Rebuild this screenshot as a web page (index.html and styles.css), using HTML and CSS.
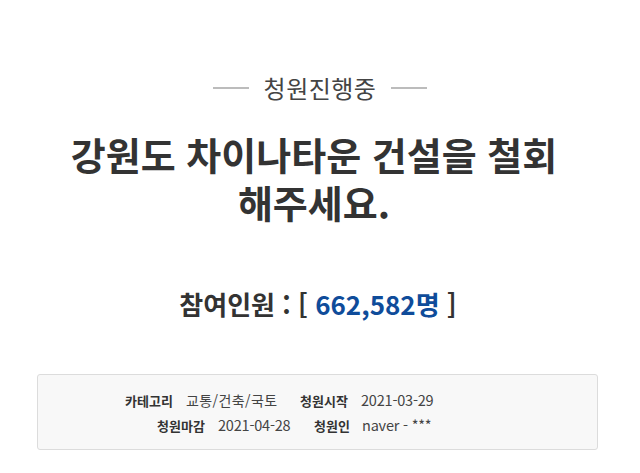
FILE: index.html
```html
<!DOCTYPE html>
<html lang="ko">
<head>
<meta charset="utf-8">
<link rel="stylesheet" href="styles.css">
</head>
<body>
<div class="page">
  <div class="status"><span class="dash"></span><span class="status-text">청원진행중</span><span class="dash"></span></div>
  <h1 class="title">강원도 차이나타운 건설을 철회<br>해주세요.</h1>
  <h2 class="count">참여인원 : [ <span class="num">662,582명</span> ]</h2>
  <div class="info">
    <div class="row row1">
      <span class="label l1">카테고리</span><span class="value v1 ko">교통/건축/국토</span>
      <span class="label l2">청원시작</span><span class="value">2021-03-29</span>
    </div>
    <div class="row row2">
      <span class="label l1">청원마감</span><span class="value v1">2021-04-28</span>
      <span class="label l2">청원인</span><span class="value">naver - ***</span>
    </div>
  </div>
</div>
</body>
</html>
```
FILE: styles.css
```css
html, body {
  margin: 0;
  padding: 0;
  background: #fff;
}
body {
  font-family: "Noto Sans CJK KR", "Noto Sans", sans-serif;
  color: #333;
}
.page {
  width: 640px;
  height: 473px;
  padding-top: 74px;
  box-sizing: border-box;
}
.status {
  display: flex;
  justify-content: center;
  align-items: center;
  height: 28px;
  gap: 15px;
}
.dash {
  width: 36px;
  height: 2px;
  background: #bcbcbc;
}
.status-text {
  font-size: 24px;
  letter-spacing: 0.5px;
  color: #444;
  line-height: 28px;
}
.title {
  margin: 28px 0 0;
  padding-right: 12px;
  text-align: center;
  font-size: 38px;
  line-height: 48px;
  font-weight: 700;
  color: #333;
}
.count {
  margin: 61px 0 0;
  padding-right: 4px;
  text-align: center;
  font-size: 26px;
  line-height: 34px;
  font-weight: 700;
  color: #333;
}
.num {
  color: #0f4c9a;
}
.info {
  margin: 53px 42px 0 37px;
  height: 76px;
  box-sizing: border-box;
  border: 1px solid #dcdcdc;
  border-radius: 3px;
  background: #f8f8f8;
  padding-top: 12px;
}
.row {
  display: flex;
  align-items: baseline;
  font-size: 13px;
  line-height: 25px;
  height: 25px;
  white-space: nowrap;
}
.row1 { padding-left: 87px; }
.row2 { padding-left: 119px; }
.label {
  flex: none;
  font-weight: 700;
  color: #333;
}
.value {
  flex: none;
  color: #444;
  font-size: 14.5px;
  letter-spacing: -0.2px;
}
.value.ko {
  font-size: 14px;
  letter-spacing: 0.4px;
}
.l1 { width: 61px; }
.row1 .v1 { width: 114px; }
.row2 .v1 { width: 96px; }
.row1 .l2 { width: 61px; }
.row2 .l2 { width: 48px; }
```
